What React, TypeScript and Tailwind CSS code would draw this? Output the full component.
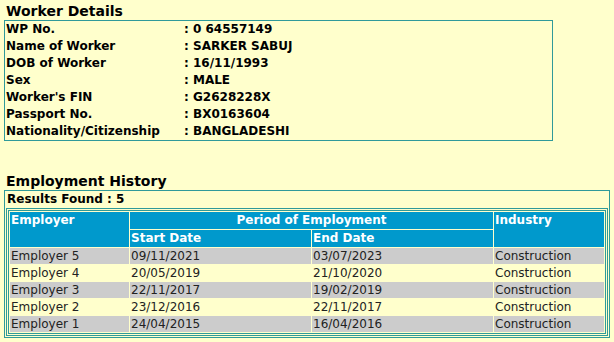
import React from "react";

const details: [string, string][] = [
  ["WP No.", "0 64557149"],
  ["Name of Worker", "SARKER SABUJ"],
  ["DOB of Worker", "16/11/1993"],
  ["Sex", "MALE"],
  ["Worker's FIN", "G2628228X"],
  ["Passport No.", "BX0163604"],
  ["Nationality/Citizenship", "BANGLADESHI"],
];

const history = [
  { employer: "Employer 5", start: "09/11/2021", end: "03/07/2023", industry: "Construction" },
  { employer: "Employer 4", start: "20/05/2019", end: "21/10/2020", industry: "Construction" },
  { employer: "Employer 3", start: "22/11/2017", end: "19/02/2019", industry: "Construction" },
  { employer: "Employer 2", start: "23/12/2016", end: "22/11/2017", industry: "Construction" },
  { employer: "Employer 1", start: "24/04/2015", end: "16/04/2016", industry: "Construction" },
];

const App: React.FC = () => {
  return (
    <div className="w-[614px] h-[342px] bg-[#ffffcc] text-black font-['DejaVu_Sans',Verdana,sans-serif] px-1 pt-[2px] overflow-hidden">
      <h2 className="text-[14px] font-bold leading-[18px] px-[2px]">Worker Details</h2>
      <div className="w-[549px] border border-[#2f9a9a] px-px">
        {details.map(([label, value]) => (
          <div key={label} className="flex text-[12px] font-bold leading-[17px]">
            <span className="w-[178px]">{label}</span>
            <span>: {value}</span>
          </div>
        ))}
      </div>

      <h2 className="text-[14px] font-bold leading-[18px] px-[2px] mt-[31px]">Employment History</h2>
      <div className="border border-[#2f9a9a] px-px pb-px">
        <div className="text-[12px] font-bold leading-[17px] px-px">Results Found : 5</div>
        <div className="border border-[#2f9a9a] p-px">
          <table className="w-full table-fixed border border-[#2f9a9a] border-separate border-spacing-[1px] text-[12px] leading-[17px]">
            <colgroup>
              <col className="w-[119px]" />
              <col className="w-[181px]" />
              <col className="w-[181px]" />
              <col />
            </colgroup>
            <thead>
              <tr className="bg-[#0099cc] text-white">
                <th rowSpan={2} className="px-px align-top text-left font-bold">Employer</th>
                <th colSpan={2} className="text-center font-bold">Period of Employment</th>
                <th rowSpan={2} className="px-px align-top text-left font-bold">Industry</th>
              </tr>
              <tr className="bg-[#0099cc] text-white">
                <th className="px-px text-left font-bold">Start Date</th>
                <th className="px-px text-left font-bold">End Date</th>
              </tr>
            </thead>
            <tbody className="text-[#222] leading-[16px]">
              {history.map((row, i) => (
                <tr key={row.employer} className={i % 2 === 0 ? "bg-[#cccccc]" : "bg-[#ffffcc]"}>
                  <td className="px-px">{row.employer}</td>
                  <td className="px-px">{row.start}</td>
                  <td className="px-px">{row.end}</td>
                  <td className="px-px">{row.industry}</td>
                </tr>
              ))}
            </tbody>
          </table>
        </div>
      </div>
    </div>
  );
};

export default App;
